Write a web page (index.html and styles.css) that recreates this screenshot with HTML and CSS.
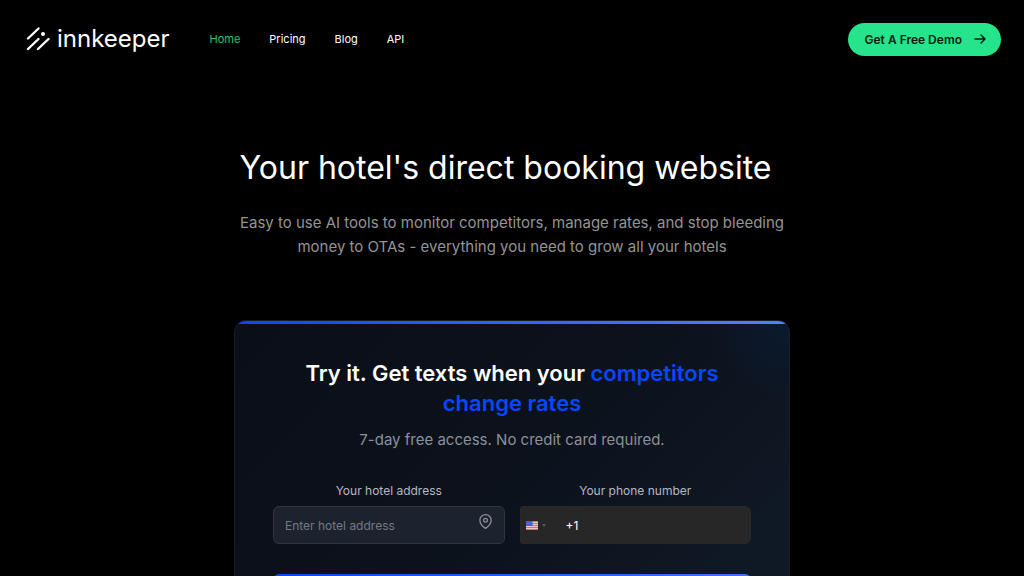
FILE: index.html
```html
<!DOCTYPE html>
<html lang="en">
<head>
    <meta charset="UTF-8">
    <meta name="viewport" content="width=device-width, initial-scale=1.0">
    <title>Innkeeper</title>
    <link rel="stylesheet" href="styles.css">
</head>
<body>
    <header class="header">
        <a class="logo" href="#">
            <svg class="logo-mark" viewBox="0 0 24 24" aria-hidden="true">
                <g stroke="currentColor" stroke-width="2.4" stroke-linecap="round">
                    <path d="M2 11.500 12.500 1.500M2 22 12.500 12M12 22 22.500 12"/>
                </g>
                <circle cx="17" cy="7" r="2" fill="currentColor"/>
            </svg>
            <span>innkeeper</span>
        </a>
        <nav class="nav">
            <a class="active" href="#">Home</a>
            <a href="#">Pricing</a>
            <a href="#">Blog</a>
            <a href="#">API</a>
        </nav>
        <a class="demo" href="#">
            Get A Free Demo
            <svg class="arrow" viewBox="0 0 12 12" aria-hidden="true">
                <path d="M1 6h10M7 2l4 4-4 4" fill="none" stroke="currentColor" stroke-width="1.5" stroke-linecap="round" stroke-linejoin="round"/>
            </svg>
        </a>
    </header>

    <main class="hero">
        <h1>Your hotel's direct booking website</h1>
        <p class="intro">Easy to use AI tools to monitor competitors, manage rates, and stop bleeding<br>money to OTAs - everything you need to grow all your hotels</p>

        <form class="card">
            <h2>Try it. Get texts when your <span>competitors<br>change rates</span></h2>
            <p class="note">7-day free access. No credit card required.</p>
            <div class="fields">
                <div class="field">
                    <label for="address">Your hotel address</label>
                    <div class="control">
                        <input id="address" type="text" placeholder="Enter hotel address">
                        <svg class="pin" viewBox="0 0 24 24" aria-hidden="true">
                            <g fill="none" stroke="currentColor" stroke-width="2" stroke-linejoin="round">
                                <path d="M21 10c0 7-9 13-9 13s-9-6-9-13a9 9 0 0 1 18 0z"/>
                                <circle cx="12" cy="10" r="3"/>
                            </g>
                        </svg>
                    </div>
                </div>
                <div class="field">
                    <label for="phone">Your phone number</label>
                    <div class="control phone">
                        <div class="country">
                            <svg class="flag" viewBox="0 0 12 9" aria-hidden="true">
                                <path fill="#f3c5ca" d="M0 0h12v9H0z"/>
                                <path stroke="#ef6570" d="M0 .5h12M0 2.500h12M0 4.500h12M0 6.500h12M0 8.500h12"/>
                                <path fill="#3c5fd8" d="M0 0h6.500v5H0z"/>
                                <path stroke="#7390ea" stroke-width=".5" stroke-dasharray=".6 .8" d="M.6 1.200h5.500M1 2.500h5M.6 3.800h5.500"/>
                            </svg>
                            <svg class="caret" viewBox="0 0 4 3" aria-hidden="true"><path fill="currentColor" d="M0 0h4L2 3z"/></svg>
                            <select aria-label="Country">
                                <option>+1</option>
                            </select>
                        </div>
                        <input id="phone" type="tel" value="+1">
                    </div>
                </div>
            </div>
            <button class="submit" type="submit" aria-label="Submit"></button>
        </form>
    </main>
</body>
</html>
```
FILE: styles.css
```css
* {
    box-sizing: border-box;
}
body {
    margin: 0;
    background-color: #000;
    color: #fff;
    font-family: Inter, "Liberation Sans", sans-serif;
}
a {
    color: inherit;
    text-decoration: none;
}
.header {
    display: flex;
    align-items: center;
    height: 78px;
    padding: 0 23px 0 26px;
}
.logo {
    display: flex;
    align-items: center;
    gap: 7px;
    font-size: 24px;
    line-height: 32px;
}
.logo-mark {
    width: 24px;
    height: 24px;
}
.nav {
    display: flex;
    gap: 29px;
    margin-left: 40px;
    font-size: 11px;
    line-height: 16px;
}
.nav .active {
    color: #22c573;
}
.demo {
    display: flex;
    align-items: center;
    gap: 12px;
    margin-left: auto;
    padding: 0 15px 0 17px;
    border-radius: 17px;
    background-color: #25e48c;
    color: #061a10;
    font-size: 12px;
    font-weight: 600;
    line-height: 33px;
}
.arrow {
    width: 12px;
    height: 12px;
}
.hero {
    padding: 66px 24px 0;
    text-align: center;
}
h1 {
    margin: 0;
    padding-right: 13px;
    font-size: 32px;
    font-weight: 400;
    line-height: 48px;
}
.intro {
    margin: 19px 0 61px;
    color: #949494;
    font-size: 15px;
    line-height: 24px;
}
.card {
    position: relative;
    max-width: 556px;
    margin: 0 auto;
    padding: 37px 38px 32px;
    border: 1px solid #171d26;
    border-radius: 12px;
    background: radial-gradient(circle at 100% 0, #0b1a30, transparent 80px), linear-gradient(135deg, #0a0e17, #0c121c 50%, #101b28);
    overflow: hidden;
}
.card::before {
    content: "";
    position: absolute;
    top: -1px;
    left: 0;
    right: 0;
    height: 4px;
    background: linear-gradient(90deg, #0a46fa, #5580f5);
}
h2 {
    margin: 0;
    font-size: 22px;
    font-weight: 600;
    line-height: 30px;
}
h2 span {
    color: #0647ff;
}
.note {
    margin: 10px 0 31px;
    color: #8b9099;
    font-size: 15px;
    line-height: 24px;
}
.fields {
    display: grid;
    grid-template-columns: 1fr 1fr;
    gap: 15px;
}
.field {
    min-width: 0;
}
.field label {
    display: block;
    margin-bottom: 7px;
    color: #b4b9c1;
    font-size: 12px;
    line-height: 16px;
}
.control {
    display: flex;
    position: relative;
    height: 38px;
    border: 1px solid #303640;
    border-radius: 6px;
    background-color: #1d232e;
}
.control input {
    flex: 1;
    min-width: 0;
    padding: 0 11px;
    border: 0;
    outline: 0;
    background: none;
    color: #fff;
    font: inherit;
    font-size: 12px;
}
.control input::placeholder {
    color: #737984;
    opacity: 1;
}
.pin {
    flex: none;
    width: 15px;
    height: 15px;
    margin: 7px 11px 0 0;
    color: #8b9099;
}
.phone {
    border-color: #292929;
    border-radius: 3px 6px 6px 3px;
    background-color: #272727;
}
.country {
    display: flex;
    position: relative;
    align-items: center;
    gap: 4px;
    padding: 0 14px 0 5px;
}
.country select {
    position: absolute;
    inset: 0;
    width: 100%;
    opacity: 0;
}
.flag {
    width: 12px;
    height: 9px;
}
.caret {
    width: 4px;
    height: 3px;
    color: #555;
}
.phone input {
    padding: 0 6px;
}
.submit {
    display: block;
    width: 100%;
    height: 40px;
    margin-top: 30px;
    border: 0;
    border-radius: 6px;
    background: linear-gradient(90deg, #0a46fa, #3e6ff8);
}
```
